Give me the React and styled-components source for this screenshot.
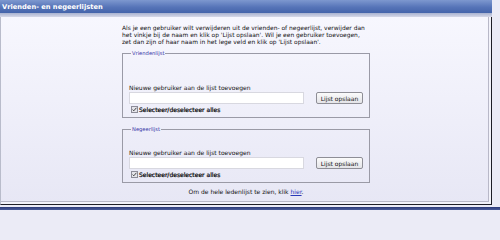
import React from "react";
import styled, { createGlobalStyle } from "styled-components";

const Global = createGlobalStyle`
  html, body { margin: 0; padding: 0; background: #ebebf6; }
  body { font-family: "DejaVu Sans", Verdana, sans-serif; }
`;

const Page = styled.div`
  width: 500px;
  height: 212px;
  overflow: hidden;
  background: #ebebf6;
`;

const Box = styled.div`
  width: 492px;
`;

const Header = styled.div`
  height: 13px;
  display: flex;
  align-items: center;
  padding-left: 2px;
  background: linear-gradient(#7d98cf, #5674b8 55%, #4464aa);
  color: #fff;
  font-weight: bold;
  font-size: 6.7px;
`;

const Band = styled.div`
  height: 4px;
  background: linear-gradient(#a8b2d0, #d6d8e8);
`;

const Panel = styled.div`
  border-left: 1px solid #b9bccb;
  border-right: 1px solid #1e1e26;
  border-bottom: 1px solid #1e1e26;
  box-shadow: inset -2px -2px 0 #f2f2fa, inset -3px -3px 0 #b8b8c8;
  background: linear-gradient(#f7f7fe, #e7e7f5);
  height: 188px;
  box-sizing: border-box;
  padding: 7px 0 0 121px;
  display: flex;
  flex-direction: column;
`;

const Column = styled.div`
  width: 248px;
  display: flex;
  flex-direction: column;
`;

const Intro = styled.p`
  margin: 0;
  font-size: 5.95px;
  line-height: 7px;
  color: #111;
`;

const Fieldset = styled.fieldset`
  margin: ${(p) => p.$top}px 0 0 0;
  padding: 0 6px 4px 6px;
  border: 1px solid #9a9aa6;
  display: flex;
  flex-direction: column;
  min-width: 0;
`;

const Legend = styled.legend`
  font-size: 5.2px;
  color: #3434a6;
  padding: 0 1px;
  margin-left: 2px;
  line-height: 5px;
`;

const List = styled.div`
  height: ${(p) => p.$h}px;
`;

const Label = styled.div`
  font-size: 6px;
  line-height: 7px;
  color: #111;
`;

const InputRow = styled.div`
  display: flex;
  align-items: center;
  gap: 12px;
  margin-top: 1px;
`;

const TextInput = styled.input`
  width: 175px;
  height: 12px;
  box-sizing: border-box;
  border: 1px solid #d8d8e0;
  background: #fff;
  padding: 0;
  margin: 0;
  outline: none;
`;

const Button = styled.button`
  width: 49px;
  height: 12px;
  padding: 0;
  margin: 0;
  box-sizing: border-box;
  border: 1px solid #8e8e96;
  border-radius: 2px;
  background: linear-gradient(#fbfbfb, #e4e4e8);
  font-family: "DejaVu Sans", Verdana, sans-serif;
  font-size: 6px;
  color: #111;
`;

const CheckRow = styled.label`
  display: flex;
  align-items: center;
  gap: 1px;
  margin-top: 2px;
  margin-left: 2px;
  font-size: 6px;
  line-height: 7px;
  color: #000;
  -webkit-text-stroke: 0.2px #000;
`;

const Check = styled.span`
  width: 5px;
  height: 5px;
  border: 1px solid #8c8c98;
  background: #e4e4ea;
  display: flex;
  align-items: center;
  justify-content: center;
  -webkit-text-stroke: 0;
  svg { display: block; }
`;

const Footer = styled.div`
  margin: 5px 0 0 -121px;
  text-align: center;
  font-size: 6px;
  line-height: 7px;
  color: #111;
  a { color: #2a3ab8; text-decoration: underline; }
`;

const NextBar = styled.div`
  margin-top: 2px;
  height: 3px;
  background: linear-gradient(#2c3a78, #4a5c9a);
`;

function ListBox({ title, top, listHeight }) {
  return (
    <Fieldset $top={top}>
      <Legend>{title}</Legend>
      <List $h={listHeight} />
      <Label>Nieuwe gebruiker aan de lijst toevoegen</Label>
      <InputRow>
        <TextInput type="text" />
        <Button type="button">Lijst opslaan</Button>
      </InputRow>
      <CheckRow>
        <Check>
          <svg width="5" height="5" viewBox="0 0 5 5">
            <path d="M0.6 2.6 L1.8 3.8 L4.4 0.8" fill="none" stroke="#333" strokeWidth="0.9" />
          </svg>
        </Check>
        Selecteer/deselecteer alles
      </CheckRow>
    </Fieldset>
  );
}

export default function App() {
  return (
    <Page>
      <Global />
      <Box>
        <Header>Vrienden- en negeerlijsten</Header>
        <Band />
        <Panel>
          <Column>
            <Intro>
              Als je een gebruiker wilt verwijderen uit de vrienden- of negeerlijst, verwijder dan
              het vinkje bij de naam en klik op 'Lijst opslaan'. Wil je een gebruiker toevoegen,
              zet dan zijn of haar naam in het lege veld en klik op 'Lijst opslaan'.
            </Intro>
            <ListBox title="Vriendenlijst" top={6} listHeight={28} />
            <ListBox title="Negeerlijst" top={9} listHeight={17} />
          </Column>
          <Footer>
            Om de hele ledenlijst te zien, klik <a href="#">hier</a>.
          </Footer>
        </Panel>
      </Box>
      <NextBar />
    </Page>
  );
}
